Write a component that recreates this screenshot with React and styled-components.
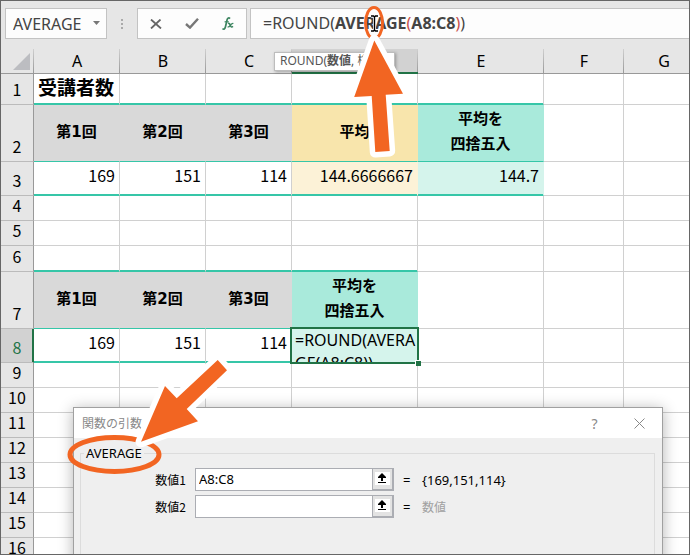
import React, { useState } from "react";
import styled, { createGlobalStyle, css } from "styled-components";

const columns = ["A", "B", "C", "D", "E", "F", "G"];

const rows = [
  { n: 1, h: 31, line: 2, lined: 5, cells: [{ text: "受講者数", kind: "title" }] },
  {
    n: 2,
    h: 57,
    line: 1,
    lined: 5,
    cells: [
      { text: "第1回", kind: "head", bg: "#d9d9d9" },
      { text: "第2回", kind: "head", bg: "#d9d9d9" },
      { text: "第3回", kind: "head", bg: "#d9d9d9" },
      { text: "平均", kind: "head", bg: "#f8e5ac" },
      { text: "平均を\n四捨五入", kind: "head", bg: "#a9eadb" },
    ],
  },
  {
    n: 3,
    h: 34,
    line: 2,
    lined: 5,
    cells: [
      { text: "169" },
      { text: "151" },
      { text: "114" },
      { text: "144.6666667", bg: "#fcf2d7" },
      { text: "144.7", bg: "#d5f4ec" },
    ],
  },
  { n: 4, h: 25 },
  { n: 5, h: 25 },
  { n: 6, h: 26, line: 2, lined: 4 },
  {
    n: 7,
    h: 57,
    line: 1,
    lined: 4,
    cells: [
      { text: "第1回", kind: "head", bg: "#d9d9d9" },
      { text: "第2回", kind: "head", bg: "#d9d9d9" },
      { text: "第3回", kind: "head", bg: "#d9d9d9" },
      { text: "平均を\n四捨五入", kind: "head", bg: "#a9eadb" },
    ],
  },
  {
    n: 8,
    h: 34,
    line: 2,
    lined: 4,
    cells: [
      { text: "169" },
      { text: "151" },
      { text: "114" },
      { text: "=ROUND(AVERAGE(A8:C8))", kind: "edit", bg: "#d5f4ec" },
    ],
  },
  ...[9, 10, 11, 12, 13, 14, 15, 16].map((n) => ({ n, h: 25 })),
];

const PickIcon = () => (
  <svg width="15" height="13" viewBox="0 0 15 13">
    <rect width="15" height="13" fill="#fff" />
    <path d="M7 1 L11 5 V6 H8 V9 H6 V6 H3 V5 Z" fill="#000" />
    <rect x="3" y="10" width="8" height="1" fill="#000" />
  </svg>
);

const FormulaBar = () => (
  <Bar>
    <NameBox>
      <NameInput aria-label="名前ボックス" defaultValue="AVERAGE" />
      <DropButton aria-label="名前の一覧">
        <svg width="7" height="4" viewBox="0 0 7 4">
          <path d="M0 0 H7 L3.5 4 Z" fill="#777" />
        </svg>
      </DropButton>
    </NameBox>
    <Grip>
      <svg width="2" height="10" viewBox="0 0 2 10" fill="#aaa">
        <rect width="2" height="2" />
        <rect y="4" width="2" height="2" />
        <rect y="8" width="2" height="2" />
      </svg>
    </Grip>
    <ButtonGroup>
      <BarButton aria-label="キャンセル">
        <svg width="12" height="10" viewBox="0 0 12 10">
          <path d="M1 0.5 L11 9.5 M10.5 0.5 L1 9.5" stroke="#666" strokeWidth="1.8" />
        </svg>
      </BarButton>
      <BarButton aria-label="入力">
        <svg width="14" height="11" viewBox="0 0 14 11">
          <path d="M1 6 L5 9.6 L13 0.8" fill="none" stroke="#777" strokeWidth="2.4" />
        </svg>
      </BarButton>
      <BarButton aria-label="関数の挿入">
        <svg width="12" height="13" viewBox="0 0 12 13" fill="none" stroke="#3d8560">
          <path
            d="M8 1.6 C7 0.4 5.6 0.7 5.1 2.8 L3.4 10 C3 11.9 1.8 12.6 0.4 11.6"
            strokeWidth="1.7"
          />
          <path d="M2.6 4.8 H6.8" strokeWidth="1.2" />
          <path d="M6 6.6 C7.4 5.8 7.8 7 8.4 8.4 C8.9 9.8 9.6 10.5 11 9.4" strokeWidth="1.6" />
          <path d="M11.4 6.5 C10 6 9.2 7.2 8.3 8.4 C7.5 9.6 6.8 10.4 5.6 9.8" strokeWidth="1.2" />
        </svg>
      </BarButton>
    </ButtonGroup>
    <Formula
      role="textbox"
      aria-label="数式バー"
      contentEditable
      suppressContentEditableWarning
    >
      =ROUND(<b>AVERAGE</b>
      <Paren>(</Paren>
      <b>A8:C8</b>
      <Paren>)</Paren>)
    </Formula>
  </Bar>
);

const SheetCell = ({ cell, line, edge }) => {
  if (cell.kind === "edit") {
    return (
      <Cell $bg={cell.bg} $line={line} $edge={edge}>
        <CellEditor aria-label="D8" spellCheck={false} defaultValue={cell.text} />
        <FillHandle />
      </Cell>
    );
  }
  return (
    <Cell $bg={cell.bg} $kind={cell.kind} $line={line} $edge={edge}>
      {cell.text}
    </Cell>
  );
};

const Sheet = () => (
  <Grid>
    <colgroup>
      <Col $w={33} />
      <Col $w={86} />
      <Col $w={86} />
      <Col $w={86} />
      <Col $w={126} />
      <Col $w={126} />
      <Col $w={80} />
      <Col $w={80} />
      <col />
    </colgroup>
    <thead>
      <tr>
        <Corner aria-label="すべて選択">
          <svg width="17" height="17" viewBox="0 0 17 17">
            <path d="M17 0 V17 H0 Z" fill="#bcbdc1" />
          </svg>
        </Corner>
        {columns.map((c) => (
          <ColHead key={c} $on={c === "D"}>
            {c}
          </ColHead>
        ))}
        <ColHead />
      </tr>
    </thead>
    <tbody>
      {rows.map((row) => (
        <Row key={row.n} $h={row.h}>
          <RowHead $on={row.n === 8}>{row.n}</RowHead>
          {[...columns, ""].map((c, i) => (
            <SheetCell
              key={i}
              cell={(row.cells && row.cells[i]) || {}}
              line={i < row.lined ? row.line : 0}
              edge={Boolean(row.cells && row.cells[i] && row.cells[i].bg)}
            />
          ))}
        </Row>
      ))}
    </tbody>
  </Grid>
);

const ArgumentDialog = () => {
  const [values, setValues] = useState(["A8:C8", ""]);
  const results = ["{169,151,114}", "数値"];

  const handleChange = (i, value) => {
    setValues(values.map((v, j) => (i === j ? value : v)));
  };

  return (
    <Dialog role="dialog" aria-label="関数の引数">
      <TitleBar>
        <Title>関数の引数</Title>
        <TitleButton aria-label="ヘルプ">?</TitleButton>
        <TitleButton aria-label="閉じる">
          <svg width="11" height="11" viewBox="0 0 11 11">
            <path d="M0.5 0.5 L10.5 10.5 M10.5 0.5 L0.5 10.5" stroke="#888" />
          </svg>
        </TitleButton>
      </TitleBar>
      <Group>
        <Legend>AVERAGE</Legend>
        {values.map((value, i) => (
          <ArgRow key={i}>
            <ArgLabel htmlFor={`arg${i}`}>数値{i + 1}</ArgLabel>
            <ArgInput
              id={`arg${i}`}
              value={value}
              onChange={(e) => handleChange(i, e.target.value)}
            />
            <PickButton aria-label="範囲を選択">
              <PickIcon />
            </PickButton>
            <Equals>=</Equals>
            <Result $muted={i === 1}>{results[i]}</Result>
          </ArgRow>
        ))}
      </Group>
    </Dialog>
  );
};

const beam =
  "M371 16 H373.5 L374.5 17 L375.5 16 H378 M374.5 17 V30 M371 31 H373.5 L374.5 30 L375.5 31 H378";

const App = () => (
  <>
    <GlobalStyle />
    <Window>
      <FormulaBar />
      <Sheet />
      <Hint>
        ROUND(<b>数値</b>, 桁数)
      </Hint>
      <ArgumentDialog />
      <TopCallout width="70" height="158" viewBox="344 4 70 158">
        <ellipse cx="374" cy="23" rx="8.5" ry="15.5" />
        <path d={beam} stroke="#fff" strokeWidth="3" />
        <path d={beam} stroke="#000" strokeWidth="1.4" />
        <Arrow d="M374.3 40.5 L403 93.7 L385.7 94.8 L389.7 151 L375.3 152 L371.7 96 L354.2 97 Z" />
      </TopCallout>
      <SideCallout width="176" height="130" viewBox="62 350 176 130">
        <ellipse cx="114.5" cy="454.5" rx="44.5" ry="17" strokeWidth="5" />
        <Arrow d="M141 441.8 L165 386 L176.7 398.3 L217.7 360 L227 370.3 L186.7 409 L198 421.3 Z" />
      </SideCallout>
    </Window>
  </>
);

export default App;

const GlobalStyle = createGlobalStyle`
  * {
    box-sizing: border-box;
  }
  body {
    margin: 0;
    background: #fff;
    font-family: "Noto Sans", "Noto Sans CJK JP", sans-serif;
  }
  button, input, textarea {
    margin: 0;
    padding: 0;
    border: none;
    border-radius: 0;
    background: none;
    font: inherit;
    color: inherit;
    outline: none;
  }
`;

const Window = styled.div`
  position: relative;
  height: 100vh;
  overflow: hidden;
  border: 1px solid #666;
  background: #e6e6e6;
`;

const Bar = styled.div`
  display: flex;
  height: 48px;
  padding: 7px 0 10px 4px;
  font-size: 16px;
  color: #444;
`;

const box = css`
  border: 1px solid #c3c3c3;
  background: #fdfdfd;
`;

const NameBox = styled.div`
  ${box}
  display: flex;
  width: 102px;
`;

const NameInput = styled.input`
  flex: 1;
  min-width: 0;
  padding-left: 7px;
`;

const DropButton = styled.button`
  display: flex;
  align-items: center;
  justify-content: center;
  width: 20px;
  padding-bottom: 2px;
`;

const Grip = styled.div`
  display: flex;
  align-items: center;
  justify-content: center;
  width: 30px;
`;

const ButtonGroup = styled.div`
  ${box}
  display: flex;
  width: 110px;
  margin-right: 3px;
`;

const BarButton = styled.button`
  flex: 1;
  display: flex;
  align-items: center;
  justify-content: center;
`;

const Formula = styled.div`
  ${box}
  flex: 1;
  border-right: none;
  padding-left: 12px;
  line-height: 28px;
  white-space: nowrap;
  outline: none;
`;

const Paren = styled.span`
  color: #c8504a;
`;

const Grid = styled.table`
  width: 100%;
  min-width: 703px;
  table-layout: fixed;
  border-collapse: separate;
  border-spacing: 0;
  background: #fff;
  font-family: "Noto Sans CJK JP", sans-serif;
  font-size: 16px;
  color: #000;

  th,
  td {
    padding: 0;
  }
`;

const Col = styled.col`
  width: ${(p) => p.$w}px;
`;

/* the divider on the right fades out towards the top */
const topHead = css`
  font-weight: 400;
  background: linear-gradient(#cfcfcf, #999) right / 1px 100% no-repeat
    ${(p) => (p.$on ? "#d2d2d2" : "#e6e6e6")};
  border-bottom: 1px solid ${(p) => (p.$on ? "#217346" : "#999")};
`;

const ColHead = styled.th`
  ${topHead}
  height: 25px;
  font-family: "Noto Sans", sans-serif;
  line-height: 22px;
  box-shadow: ${(p) => (p.$on ? "inset 0 -1px #217346" : "none")};
`;

const Corner = styled.th`
  ${topHead}
  vertical-align: bottom;

  svg {
    display: block;
    margin: 0 4px 3px auto;
  }
`;

const Row = styled.tr`
  height: ${(p) => p.$h}px;
`;

const RowHead = styled.th`
  font-weight: 400;
  background: ${(p) => (p.$on ? "#d2d2d2" : "#e6e6e6")};
  color: ${(p) => (p.$on ? "#217346" : "#000")};
  border-bottom: 1px solid #bbb;
  border-right: 1px solid ${(p) => (p.$on ? "#217346" : "#999")};
  box-shadow: ${(p) => (p.$on ? "inset -1px 0 #217346" : "none")};
  line-height: 18px;
  vertical-align: bottom;
  && {
    padding-bottom: 6px;
  }
`;

const kinds = {
  title: css`
    text-align: left;
    font-weight: 700;
    font-size: 19px;
    line-height: 24px;
    && {
      padding: 0 0 4px 4px;
    }
  `,
  head: css`
    text-align: center;
    font-family: "DejaVu Sans", "Noto Sans CJK JP", sans-serif;
    font-weight: 700;
    font-size: 15px;
    line-height: 25px;
    && {
      padding: 0 0 2px;
    }
  `,
};

const Cell = styled.td`
  position: relative;
  text-align: right;
  line-height: 22px;
  white-space: pre;
  background: ${(p) => p.$bg || "#fff"};
  border-right: 1px solid ${(p) => (p.$edge ? p.$bg : "#d0d0d0")};
  border-bottom: 1px solid ${(p) => (p.$line ? "#36c6a8" : "#d0d0d0")};
  box-shadow: ${(p) => (p.$line === 2 ? "inset 0 -1px #36c6a8" : "none")};
  && {
    padding: 0 4px 8px 0;
  }
  ${(p) => kinds[p.$kind]}
`;

const CellEditor = styled.textarea`
  position: absolute;
  inset: -2px;
  width: 129px;
  height: 37px;
  z-index: 1;
  border: 2px solid #217346;
  background: #d5f4ec;
  padding-left: 3px;
  font-family: "Noto Sans", sans-serif;
  font-size: 16px;
  line-height: 23px;
  word-break: break-all;
  overflow: hidden;
  resize: none;
`;

const FillHandle = styled.span`
  position: absolute;
  right: -4px;
  bottom: -4px;
  z-index: 2;
  width: 6px;
  height: 6px;
  border: solid #fff;
  border-width: 1px 0 0 1px;
  background: #217346;
`;

const Hint = styled.div`
  position: absolute;
  left: 273px;
  top: 51px;
  height: 19px;
  padding: 0 9px 0 5px;
  border: 1px solid #bdbdbd;
  background: #fff;
  box-shadow: 1px 1px 3px rgba(0, 0, 0, 0.3);
  font-size: 12px;
  line-height: 15px;
  color: #555;
  white-space: nowrap;
`;

const Dialog = styled.section`
  position: absolute;
  top: 406px;
  left: 72px;
  right: 26px;
  bottom: -20px;
  display: flex;
  flex-direction: column;
  border: 1px solid #a0a0a0;
  background: #efefef;
  box-shadow: 0 2px 14px rgba(0, 0, 0, 0.3);
  font-size: 13px;
  color: #000;
`;

const TitleBar = styled.div`
  display: flex;
  align-items: center;
  height: 30px;
  padding-left: 8px;
  background: #fff;
  color: #888;
`;

const Title = styled.span`
  flex: 1;
  font-size: 12px;
`;

const TitleButton = styled.button`
  display: flex;
  align-items: center;
  justify-content: center;
  width: 45px;
  height: 28px;
  font-size: 14px;
`;

const Group = styled.fieldset`
  flex: 1;
  min-width: 0;
  margin: 6px 7px 0 6px;
  padding: 5px 0 0;
  border: 1px solid #dcdcdc;
  border-bottom: none;
`;

const Legend = styled.legend`
  margin-left: 3px;
  padding: 0 2px;
  line-height: 19px;
`;

const ArgRow = styled.div`
  display: flex;
  align-items: center;
  height: 23px;
  margin-bottom: 4px;
`;

const ArgLabel = styled.label`
  width: 105px;
  text-align: right;
  font-family: "Noto Sans CJK JP", sans-serif;
  font-size: 12px;
`;

const ArgInput = styled.input`
  width: 177px;
  height: 23px;
  margin-left: 9px;
  padding: 0 0 2px 3px;
  border: 1px solid #abadb3;
  border-right: none;
  background: #fff;
`;

const PickButton = styled.button`
  display: flex;
  align-items: center;
  justify-content: center;
  width: 22px;
  height: 23px;
  padding-bottom: 2px;
  border: solid #abadb3;
  border-width: 1px 2px 2px 1px;
  background: #e3e3e3;
`;

const Equals = styled.span`
  width: 28px;
  padding-left: 9px;
`;

const Result = styled.output`
  color: ${(p) => (p.$muted ? "#a0a0a0" : "#000")};
  font-size: ${(p) => (p.$muted ? 12 : 13)}px;
`;

const callout = css`
  position: absolute;
  z-index: 3;
  fill: none;
  stroke: #f26522;
  stroke-width: 3px;
  pointer-events: none;
`;

const TopCallout = styled.svg`
  ${callout}
  left: 343px;
  top: 3px;
`;

const SideCallout = styled.svg`
  ${callout}
  left: 61px;
  top: 349px;
`;

const Arrow = styled.path`
  fill: #f26522;
  stroke: #fff;
  stroke-width: 11px;
  stroke-linejoin: round;
  paint-order: stroke;
`;
